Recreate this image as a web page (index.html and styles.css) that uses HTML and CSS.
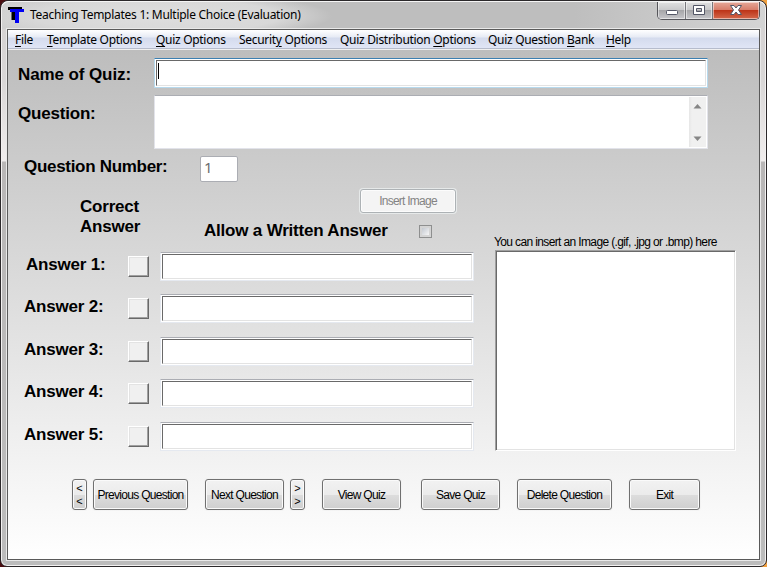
FILE: index.html
```html
<!DOCTYPE html>
<html lang="en">

<head>
  <meta charset="UTF-8">
  <meta name="viewport" content="width=device-width, initial-scale=1.0">
  <title>Teaching Templates 1: Multiple Choice (Evaluation)</title>
  <link rel="stylesheet" href="styles.css">
</head>

<body>
  <div class="window">
    <div class="titlebar">
      <svg class="logo" width="17" height="17" viewBox="0 0 17 17">
        <path d="M0 0H14V3H8V13H3.500V3H0Z" fill="#000"/>
        <path d="M2 2H16V5H11V16H7V5H2Z" fill="#0000f4"/>
      </svg>
      <span class="title">Teaching Templates 1: Multiple Choice (Evaluation)</span>
      <div class="controls">
        <span class="control min">
          <svg width="14" height="15" viewBox="0 0 14 15"><rect x="1.500" y="7.500" width="11" height="4" rx="1" fill="#fff" stroke="#535666"/></svg>
        </span>
        <span class="control max">
          <svg width="14" height="15" viewBox="0 0 14 15"><path d="M1.500 2.500H12.500V11.500H1.500ZM4.500 5.500V8.500H9.500V5.500Z" fill="#fff" fill-rule="evenodd" stroke="#535666"/></svg>
        </span>
        <span class="control close">
          <svg width="14" height="15" viewBox="0 0 14 15"><path d="M1.500 2.500H5L7 5L9 2.500H12.500L9.500 7L12.500 11.500H9L7 9L5 11.500H1.500L4.500 7Z" fill="#fff" stroke="#535666"/></svg>
        </span>
      </div>
    </div>

    <div class="client">
      <div class="menu">
        <span class="m1"><u>F</u>ile</span>
        <span class="m2"><u>T</u>emplate Options</span>
        <span class="m3"><u>Q</u>uiz Options</span>
        <span class="m4">Securit<u>y</u> Options</span>
        <span class="m5">Quiz Distribution <u>O</u>ptions</span>
        <span class="m6">Quiz Question <u>B</u>ank</span>
        <span class="m7"><u>H</u>elp</span>
      </div>

      <div class="form">
        <div class="row row-name">
          <label class="label">Name of Quiz:</label>
          <div class="field focus"><div class="sunken"><i class="caret"></i></div></div>
        </div>
        <div class="row row-question">
          <label class="label">Question:</label>
          <div class="textarea">
            <div class="scroll">
              <svg width="9" height="5" viewBox="0 0 9 5"><path d="M4.500 0L8.500 4.500H.5Z" fill="#868686"/></svg>
              <svg width="9" height="5" viewBox="0 0 9 5"><path d="M.5 .5H8.500L4.500 5Z" fill="#868686"/></svg>
            </div>
          </div>
        </div>
        <div class="row row-number">
          <label class="label">Question Number:</label>
          <div class="number">1</div>
        </div>

        <div class="middle">
          <div class="left">
            <div class="options">
              <div class="label correct">Correct<br>Answer</div>
              <div class="allow">
                <div class="insert">Insert Image</div>
                <div class="allow-row">
                  <label class="label">Allow a Written Answer</label>
                  <span class="checkbox"></span>
                </div>
              </div>
            </div>
            <div class="answers">
              <div class="answer first">
                <label class="label">Answer 1:</label>
                <span class="mark"></span>
                <div class="field"><div class="sunken"></div></div>
              </div>
              <div class="answer">
                <label class="label">Answer 2:</label>
                <span class="mark"></span>
                <div class="field"><div class="sunken"></div></div>
              </div>
              <div class="answer">
                <label class="label">Answer 3:</label>
                <span class="mark"></span>
                <div class="field"><div class="sunken"></div></div>
              </div>
              <div class="answer">
                <label class="label">Answer 4:</label>
                <span class="mark"></span>
                <div class="field"><div class="sunken"></div></div>
              </div>
              <div class="answer">
                <label class="label">Answer 5:</label>
                <span class="mark"></span>
                <div class="field"><div class="sunken"></div></div>
              </div>
            </div>
          </div>
          <div class="right">
            <div class="hint">You can insert an Image (.gif, .jpg or .bmp) here</div>
            <div class="picture"></div>
          </div>
        </div>

        <div class="buttons">
          <div class="btn tiny">&lt;<br>&lt;</div>
          <div class="btn prev">Previous Question</div>
          <div class="btn next">Next Question</div>
          <div class="btn tiny">&gt;<br>&gt;</div>
          <div class="btn view">View Quiz</div>
          <div class="btn save">Save Quiz</div>
          <div class="btn delete">Delete Question</div>
          <div class="btn exit">Exit</div>
        </div>
      </div>
    </div>
  </div>
</body>

</html>
```
FILE: styles.css
```css
* {
  margin: 0;
  padding: 0;
  box-sizing: border-box;
}

body {
  width: 767px;
  height: 567px;
  overflow: hidden;
  background: linear-gradient(90deg, #4a0d10 0, #4a0d10 50%, #f0a040 99%);
  font-family: "Liberation Sans", Arial, sans-serif;
  color: #000;
}

.window {
  width: 767px;
  height: 567px;
  padding: 0 6px 6px;
  border: 1px solid #2b282a;
  border-radius: 8px 8px 7px 7px;
  background: linear-gradient(#d5d2d2 0, #d9d7d7 80px, #f0eded 160px, #b9b7b7 161px, #bcbcbc 100%);
  box-shadow: inset 0 0 0 1px #f3f1f1;
}

.titlebar {
  display: flex;
  height: 28px;
  margin: 0 -5px;
  padding: 0 5px 0 6px;
  border-top: 1px solid #f5f5f5;
  border-radius: 7px 7px 0 0;
  background: radial-gradient(ellipse 175px 24px at 155px 14px, #dedede 0, #d8d8d8 70%, rgba(205, 205, 205, 0) 100%), linear-gradient(90deg, #cfcfcf 0, #bebebe 40%, #bebebe 75%, #d4d4d4 100%);
}

.logo {
  margin: 5px 0 0 0;
}

.title {
  margin-left: 5px;
  font: 12px/26px "Noto Sans", "Open Sans", sans-serif;
  letter-spacing: -.27px;
  white-space: nowrap;
}

.controls {
  display: flex;
  width: 103px;
  height: 18px;
  margin-left: auto;
  border: 1px solid #55555a;
  border-top: 0;
  border-radius: 0 0 5px 5px;
  overflow: hidden;
}

.control {
  display: flex;
  align-items: center;
  justify-content: center;
  width: 28px;
  border-right: 1px solid #77777c;
  background: linear-gradient(#e0e0e0 0, #c8c8ca 48%, #a6a6a9 50%, #c6c6ca 100%);
  box-shadow: inset 0 0 0 1px rgba(255, 255, 255, .5);
}

.max {
  width: 27px;
}

.close {
  flex: 1;
  border-right: 0;
  background: linear-gradient(#e5a899 0, #d67b68 48%, #bd3519 50%, #d4684b 100%);
}

.client {
  width: 753px;
  height: 531px;
  border: 1px solid #5a5a5a;
  background: linear-gradient(#bdbdbd 20px, #fff 100%);
  box-shadow: 0 0 0 1px #e9e9e9;
}

.menu {
  display: flex;
  height: 20px;
  padding-left: 7px;
  border-bottom: 1px solid #f0f0f0;
  box-shadow: inset 0 -1px #b6bccc;
  background: linear-gradient(#fff 0, #e7ebf5 7px, #d4dbed 8px, #e1e6f6 100%);
  font: 12px/20px "Noto Sans", "Open Sans", sans-serif;
  letter-spacing: -.3px;
  white-space: nowrap;
}

.menu u {
  text-underline-offset: 2px;
}

.m1 {
  width: 32px;
}

.m2 {
  width: 109px;
}

.m3 {
  width: 83px;
}

.m4 {
  width: 101px;
}

.m5 {
  width: 148px;
}

.m6 {
  width: 118px;
}

.form {
  padding-top: 8px;
}

.row {
  display: flex;
}

.label {
  font-size: 17px;
  font-weight: bold;
  line-height: 20px;
  letter-spacing: -.2px;
  white-space: nowrap;
}

.row .label {
  width: 146px;
  padding-left: 10px;
}

.row-name .label {
  padding-top: 7px;
  letter-spacing: -.1px;
}

.field {
  height: 29px;
  padding: 1px;
  border: 1px solid #e5e9f0;
  border-top-color: #abadb3;
  background: #fff;
}

.focus {
  width: 554px;
  height: 30px;
  border-color: #3c7fb1 #b7d9ed #b7d9ed;
}

.sunken {
  height: 100%;
  padding: 2px 1px;
  border: 1px solid;
  border-color: #696969 #e3e3e3 #e3e3e3 #696969;
}

.caret {
  display: block;
  width: 1px;
  height: 16px;
  background: #000;
}

.row-question {
  margin-top: 7px;
}

.row-question .label {
  padding-top: 9px;
}

.textarea {
  width: 554px;
  height: 54px;
  padding: 1px;
  border: 1px solid #e2e3ea;
  border-top-color: #abadb3;
  background: #fff;
}

.scroll {
  display: flex;
  flex-direction: column;
  justify-content: space-between;
  align-items: center;
  width: 17px;
  height: 50px;
  margin-left: auto;
  padding: 7px 0 6px;
  background: linear-gradient(90deg, #e6e6e6, #f0f0f0 3px);
}

.row-number {
  margin-top: 7px;
}

.row-number .label {
  width: 192px;
  padding: 1px 0 0 16px;
  letter-spacing: -.3px;
}

.number {
  width: 38px;
  height: 26px;
  padding-left: 3px;
  border: 1px solid #abadb3;
  border-radius: 2px;
  background: #fff;
  color: #6d6d6d;
  font: 15px/20px "Noto Sans", "Open Sans", sans-serif;
}

.middle {
  display: flex;
}

.left {
  width: 487px;
}

.options {
  display: flex;
  height: 70px;
}

.correct {
  width: 196px;
  padding: 15px 0 0 72px;
}

.insert {
  width: 96px;
  height: 24px;
  margin: 7px 0 0 156px;
  border: 1px solid #adb2b5;
  border-radius: 3px;
  background: #f4f4f4;
  box-shadow: 0 0 0 1px rgba(245, 250, 250, .6), inset 0 0 0 1px #fcfcfc;
  color: #838383;
  font-size: 12px;
  line-height: 23px;
  letter-spacing: -.75px;
  text-align: center;
}

.allow-row {
  display: flex;
  align-items: center;
  height: 20px;
  margin-top: 8px;
}

.allow-row .label {
  width: 215px;
}

.checkbox {
  width: 13px;
  height: 13px;
  margin-top: 1px;
  padding: 2px;
  border: 1px solid #8e8f8f;
  background: #f4f4f4 linear-gradient(135deg, #c3c8d0, #f6f6f6) content-box;
}

.answers {
  display: grid;
  grid-template-rows: 42px 43px 42px 43px 29px;
}

.answer {
  display: flex;
  padding-left: 16px;
}

.answer .label {
  width: 104px;
  padding-top: 3px;
}

.first .label {
  padding-left: 2px;
}

.mark {
  width: 21px;
  height: 21px;
  margin: 4px 11px 0 0;
  border: 1px solid;
  border-color: #fff #696969 #696969 #fff;
  background: #f0f0f0;
  box-shadow: inset -1px -1px #a0a0a0, inset 1px 1px #e3e3e3;
}

.answer .field {
  width: 314px;
}

.right {
  padding-top: 52px;
}

.hint {
  height: 16px;
  margin-left: -1px;
  font-size: 12px;
  line-height: 16px;
  letter-spacing: -.63px;
  white-space: nowrap;
}

.picture {
  width: 241px;
  height: 201px;
  border: 1px solid;
  border-color: #a0a0a0 #fff #fff #a0a0a0;
  background: #fff;
  box-shadow: inset 1px 1px #696969, inset -1px -1px #e3e3e3;
}

.buttons {
  display: flex;
  margin-top: 28px;
  padding-left: 64px;
}

.btn {
  height: 31px;
  border: 1px solid #707070;
  border-radius: 3px;
  background: linear-gradient(#f2f2f2 0, #ebebeb 50%, #dddddd 51%, #cfcfcf 100%);
  box-shadow: inset 0 0 0 1px #fafafa, 0 0 0 1px rgba(240, 240, 240, .6);
  font-size: 12px;
  line-height: 30px;
  letter-spacing: -.7px;
  text-align: center;
  white-space: nowrap;
}

.tiny {
  width: 15px;
  padding-top: 2px;
  font-size: 11px;
  line-height: 13px;
  letter-spacing: 0;
}

.prev {
  width: 95px;
  margin: 0 17px 0 6px;
}

.next {
  width: 79px;
  margin-right: 6px;
}

.view {
  width: 79px;
  margin: 0 20px 0 17px;
}

.save {
  width: 79px;
}

.delete {
  width: 95px;
  margin: 0 17px;
}

.exit {
  width: 71px;
}
```
